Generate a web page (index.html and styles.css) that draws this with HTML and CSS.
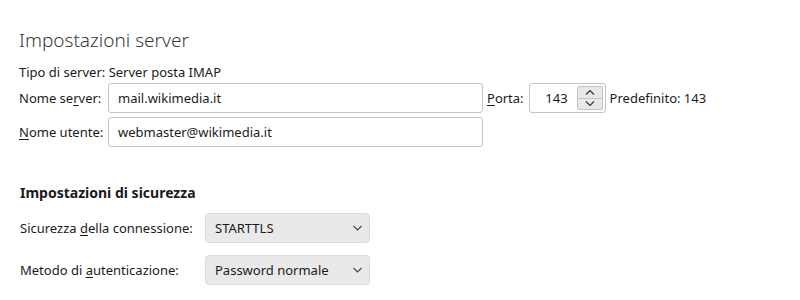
FILE: index.html
```html
<!DOCTYPE html>
<html>
    <head>
        <title>Impostazioni server</title>
        <link rel="stylesheet" href="styles.css">
    </head>
    <body>
        <div class="panel">
            <h1 class="title">Impostazioni server</h1>

            <div class="server-type">Tipo di server: Server posta IMAP</div>

            <div class="server-grid">
                <label class="label">Nome se<u>r</u>ver:</label>
                <div class="textbox">mail.wikimedia.it</div>
                <label class="label port-label"><u>P</u>orta:</label>
                <div class="spin">
                    <span class="spin-value">143</span>
                    <div class="spin-buttons">
                        <span class="spin-btn">
                            <svg width="10" height="6" viewBox="0 0 10 6"><path d="M1 5.5 L5 1.5 L9 5.5" fill="none" stroke="#333" stroke-width="1.1"/></svg>
                        </span>
                        <span class="spin-btn">
                            <svg width="10" height="6" viewBox="0 0 10 6"><path d="M1 0.5 L5 4.5 L9 0.5" fill="none" stroke="#333" stroke-width="1.1"/></svg>
                        </span>
                    </div>
                </div>
                <span class="default-port">Predefinito: 143</span>

                <label class="label"><u>N</u>ome utente:</label>
                <div class="textbox">webmaster@wikimedia.it</div>
            </div>

            <h2 class="subtitle">Impostazioni di sicurezza</h2>

            <div class="security-grid">
                <label class="label">Sicurezza <u>d</u>ella connessione:</label>
                <div class="select">
                    <span>STARTTLS</span>
                    <svg width="9" height="6" viewBox="0 0 9 6"><path d="M0.5 1 L4.5 5 L8.5 1" fill="none" stroke="#444" stroke-width="1.1"/></svg>
                </div>
                <label class="label">Metodo di <u>a</u>utenticazione:</label>
                <div class="select">
                    <span>Password normale</span>
                    <svg width="9" height="6" viewBox="0 0 9 6"><path d="M0.5 1 L4.5 5 L8.5 1" fill="none" stroke="#444" stroke-width="1.1"/></svg>
                </div>
            </div>
        </div>
    </body>
</html>
```

FILE: styles.css
```css
body {
    margin: 0;
    background: #ffffff;
    color: #1b1b1b;
    font-family: "Noto Sans", "Open Sans", sans-serif;
    font-size: 13px;
}

.panel {
    padding: 28px 0 0 19px;
}

.title {
    margin: 0;
    font-size: 19px;
    font-weight: 300;
    color: #3a3a3a;
    line-height: 24px;
}

.server-type {
    margin-top: 12px;
    line-height: 17px;
}

.label {
    white-space: nowrap;
}

.label u {
    text-decoration-thickness: 1px;
    text-underline-offset: 2px;
}

/* label | text box | port label | spin box | default port */
.server-grid {
    display: grid;
    grid-template-columns: 89px 375px auto 77px auto;
    justify-content: start;
    row-gap: 4px;
    align-items: center;
    margin-top: 2px;
}

.textbox {
    box-sizing: border-box;
    height: 30px;
    padding: 0 9px;
    border: 1px solid #c4c4c4;
    border-radius: 3px;
    display: flex;
    align-items: center;
}

.port-label {
    margin: 0 5px 0 4px;
}

.spin {
    box-sizing: border-box;
    height: 30px;
    border: 1px solid #c4c4c4;
    border-radius: 3px;
    display: flex;
    align-items: stretch;
    padding: 2px;
}

.spin-value {
    flex: 1;
    display: flex;
    align-items: center;
    justify-content: flex-end;
    padding-right: 9px;
}

.spin-buttons {
    width: 24px;
    display: flex;
    flex-direction: column;
    border: 1px solid #c4c4c4;
    border-radius: 2px;
    background: #e8e8e8;
}

.spin-btn {
    flex: 1;
    display: flex;
    align-items: center;
    justify-content: center;
}

.spin-btn + .spin-btn {
    border-top: 1px solid #c4c4c4;
}

.default-port {
    margin-left: 4px;
}

.subtitle {
    margin: 36px 0 0 1px;
    font-size: 14px;
    font-weight: 700;
    line-height: 20px;
}

.security-grid {
    display: grid;
    grid-template-columns: 186px 165px;
    row-gap: 12px;
    align-items: center;
    margin-top: 10px;
}

.security-grid .label {
    margin-left: 1px;
}

.select {
    box-sizing: border-box;
    height: 30px;
    padding: 0 7px 0 9px;
    background: #e9e9e9;
    border: 1px solid #dcdcdc;
    border-radius: 4px;
    display: flex;
    align-items: center;
    justify-content: space-between;
}
```
